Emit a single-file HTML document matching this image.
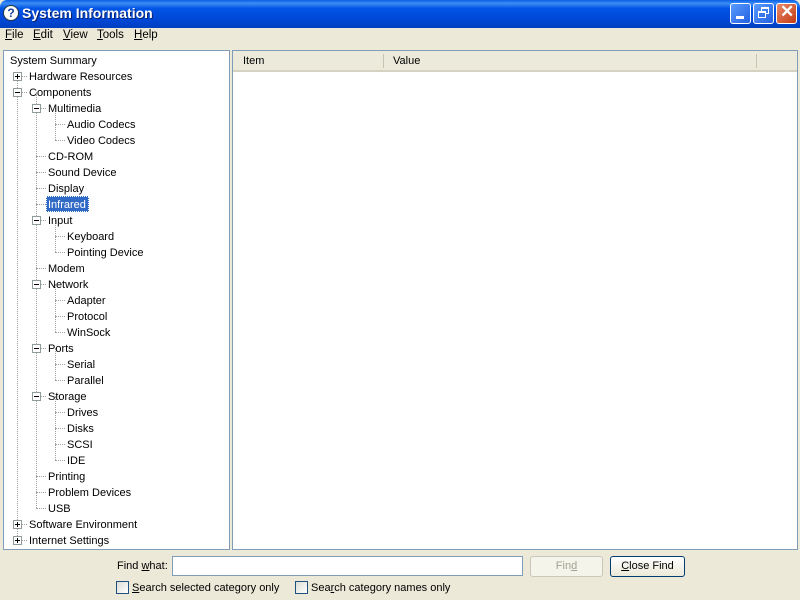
<!DOCTYPE html>
<html><head><meta charset="utf-8"><style>
*{margin:0;padding:0;box-sizing:border-box}
body{width:800px;height:600px;overflow:hidden;background:#ece9d8;font-family:"Liberation Sans",Tahoma,sans-serif;font-size:11px;color:#000;position:relative}
.tb{position:absolute;left:0;top:0;width:800px;height:28px;background:linear-gradient(#0a5fe6 0%,#3d8df5 12%,#0055e5 30%,#0047d6 70%,#0040c0 100%);border-radius:7px 7px 0 0}
.tt{position:absolute;left:22px;top:5px;color:#fff;font-weight:bold;font-size:14px;text-shadow:1px 1px #0a1f6a}
.ic{position:absolute;left:3px;top:5px;width:16px;height:16px;border-radius:50%;background:#fff;border:1px solid #234;color:#1a3e9a;font-weight:bold;font-size:12px;text-align:center;line-height:14px}
.bt{position:absolute;top:3px;width:21px;height:21px;border:1px solid #fff;border-radius:3px;background:linear-gradient(135deg,#5a9bff,#2360e0);}
.bt.x{background:linear-gradient(135deg,#e88a6a,#c43a10)}
.menu{position:absolute;top:28px;left:0;width:800px;height:18px}
.menu span{position:absolute;top:1px;font-size:11.5px}
.pane{position:absolute;background:#fff;border:1px solid #7f9db9}
.r{position:absolute;font-size:11px;white-space:nowrap;line-height:14px;margin-top:1px}
.bx{position:absolute;width:9px;height:9px;border:1px solid #919b9c;background:#fff}
.bx:before{content:"";position:absolute;left:1px;top:3px;width:5px;height:1px;background:#000}
.bx.p:after{content:"";position:absolute;left:3px;top:1px;width:1px;height:5px;background:#000}
.h{position:absolute;height:1px;border-top:1px dotted #a0a0a0}
.v{position:absolute;width:1px;border-left:1px dotted #a0a0a0}
.btn{position:absolute;height:21px;border:1px solid #003c74;border-radius:3px;background:linear-gradient(#fff,#ece9d8);text-align:center;line-height:19px;font-size:11px}
.cb{position:absolute;width:13px;height:13px;border:1px solid #1c5180;background:linear-gradient(135deg,#dcdcd7,#fff)}
</style></head><body>
<div class="tb"><div class="ic">?</div><div class="tt">System Information</div>
<div class="bt" style="left:730px"><div style="position:absolute;left:5px;top:12px;width:8px;height:3px;background:#fff"></div></div>
<div class="bt" style="left:753px"><div style="position:absolute;left:7px;top:3px;width:8px;height:7px;border:1px solid #fff;border-top-width:2px"></div><div style="position:absolute;left:4px;top:7px;width:8px;height:7px;border:1px solid #fff;border-top-width:2px;background:#3a75ee"></div></div>
<div class="bt x" style="left:776px"><div style="position:absolute;left:3px;top:-2px;color:#fff;font-size:17px;font-weight:bold">✕</div></div>
</div>
<div class="menu"><span style="left:5px"><u>F</u>ile</span><span style="left:33px"><u>E</u>dit</span><span style="left:63px"><u>V</u>iew</span><span style="left:97px"><u>T</u>ools</span><span style="left:134px"><u>H</u>elp</span></div>

<div class="pane" style="left:3px;top:50px;width:227px;height:500px"></div>
<div class="pane" style="left:232px;top:50px;width:566px;height:500px">
<div style="position:absolute;left:0;top:0;width:564px;height:21px;background:#ebeadb;border-bottom:2px solid #d6d2c2"></div>
<div style="position:absolute;left:10px;top:4px;font-size:11px">Item</div>
<div style="position:absolute;left:150px;top:3px;width:1px;height:14px;background:#c7c5b2"></div>
<div style="position:absolute;left:160px;top:4px;font-size:11px">Value</div>
<div style="position:absolute;left:523px;top:3px;width:1px;height:14px;background:#c7c5b2"></div>
</div>

<div class="v" style="left:17px;top:76px;height:464px"></div>
<div class="v" style="left:36px;top:92px;height:416px"></div>
<div class="v" style="left:55px;top:108px;height:32px"></div>
<div class="v" style="left:55px;top:220px;height:32px"></div>
<div class="v" style="left:55px;top:284px;height:48px"></div>
<div class="v" style="left:55px;top:348px;height:32px"></div>
<div class="v" style="left:55px;top:396px;height:64px"></div>

<div class="r" style="left:10px;top:53px">System Summary</div>
<div class="h" style="left:17px;top:76px;width:10px"></div><div class="bx p" style="left:13px;top:72px"></div><div class="r" style="left:29px;top:69px">Hardware Resources</div>
<div class="h" style="left:17px;top:92px;width:10px"></div><div class="bx" style="left:13px;top:88px"></div><div class="r" style="left:29px;top:85px">Components</div>
<div class="h" style="left:36px;top:108px;width:10px"></div><div class="bx" style="left:32px;top:104px"></div><div class="r" style="left:48px;top:101px">Multimedia</div>
<div class="h" style="left:55px;top:124px;width:10px"></div><div class="r" style="left:67px;top:117px">Audio Codecs</div>
<div class="h" style="left:55px;top:140px;width:10px"></div><div class="r" style="left:67px;top:133px">Video Codecs</div>
<div class="h" style="left:36px;top:156px;width:10px"></div><div class="r" style="left:48px;top:149px">CD-ROM</div>
<div class="h" style="left:36px;top:172px;width:10px"></div><div class="r" style="left:48px;top:165px">Sound Device</div>
<div class="h" style="left:36px;top:188px;width:10px"></div><div class="r" style="left:48px;top:181px">Display</div>
<div class="h" style="left:36px;top:204px;width:10px"></div><div style="position:absolute;left:46px;top:196px;width:43px;height:16px;background:#316ac5;border:1px dotted #fff"></div><div class="r" style="left:48px;top:197px;color:#fff">Infrared</div>
<div class="h" style="left:36px;top:220px;width:10px"></div><div class="bx" style="left:32px;top:216px"></div><div class="r" style="left:48px;top:213px">Input</div>
<div class="h" style="left:55px;top:236px;width:10px"></div><div class="r" style="left:67px;top:229px">Keyboard</div>
<div class="h" style="left:55px;top:252px;width:10px"></div><div class="r" style="left:67px;top:245px">Pointing Device</div>
<div class="h" style="left:36px;top:268px;width:10px"></div><div class="r" style="left:48px;top:261px">Modem</div>
<div class="h" style="left:36px;top:284px;width:10px"></div><div class="bx" style="left:32px;top:280px"></div><div class="r" style="left:48px;top:277px">Network</div>
<div class="h" style="left:55px;top:300px;width:10px"></div><div class="r" style="left:67px;top:293px">Adapter</div>
<div class="h" style="left:55px;top:316px;width:10px"></div><div class="r" style="left:67px;top:309px">Protocol</div>
<div class="h" style="left:55px;top:332px;width:10px"></div><div class="r" style="left:67px;top:325px">WinSock</div>
<div class="h" style="left:36px;top:348px;width:10px"></div><div class="bx" style="left:32px;top:344px"></div><div class="r" style="left:48px;top:341px">Ports</div>
<div class="h" style="left:55px;top:364px;width:10px"></div><div class="r" style="left:67px;top:357px">Serial</div>
<div class="h" style="left:55px;top:380px;width:10px"></div><div class="r" style="left:67px;top:373px">Parallel</div>
<div class="h" style="left:36px;top:396px;width:10px"></div><div class="bx" style="left:32px;top:392px"></div><div class="r" style="left:48px;top:389px">Storage</div>
<div class="h" style="left:55px;top:412px;width:10px"></div><div class="r" style="left:67px;top:405px">Drives</div>
<div class="h" style="left:55px;top:428px;width:10px"></div><div class="r" style="left:67px;top:421px">Disks</div>
<div class="h" style="left:55px;top:444px;width:10px"></div><div class="r" style="left:67px;top:437px">SCSI</div>
<div class="h" style="left:55px;top:460px;width:10px"></div><div class="r" style="left:67px;top:453px">IDE</div>
<div class="h" style="left:36px;top:476px;width:10px"></div><div class="r" style="left:48px;top:469px">Printing</div>
<div class="h" style="left:36px;top:492px;width:10px"></div><div class="r" style="left:48px;top:485px">Problem Devices</div>
<div class="h" style="left:36px;top:508px;width:10px"></div><div class="r" style="left:48px;top:501px">USB</div>
<div class="h" style="left:17px;top:524px;width:10px"></div><div class="bx p" style="left:13px;top:520px"></div><div class="r" style="left:29px;top:517px">Software Environment</div>
<div class="h" style="left:17px;top:540px;width:10px"></div><div class="bx p" style="left:13px;top:536px"></div><div class="r" style="left:29px;top:533px">Internet Settings</div>

<div class="r" style="left:117px;top:558px">Find <u>w</u>hat:</div>
<div style="position:absolute;left:172px;top:556px;width:351px;height:20px;background:#fff;border:1px solid #7f9db9"></div>
<div class="btn" style="left:530px;top:556px;width:73px;border-color:#c9c7ba;background:#f5f4ea;color:#a1a192">Fin<u>d</u></div>
<div class="btn" style="left:610px;top:556px;width:75px"><u>C</u>lose Find</div>
<div class="cb" style="left:116px;top:581px"></div><div class="r" style="left:132px;top:580px"><u>S</u>earch selected category only</div>
<div class="cb" style="left:295px;top:581px"></div><div class="r" style="left:311px;top:580px">Sea<u>r</u>ch category names only</div>
</body></html>
